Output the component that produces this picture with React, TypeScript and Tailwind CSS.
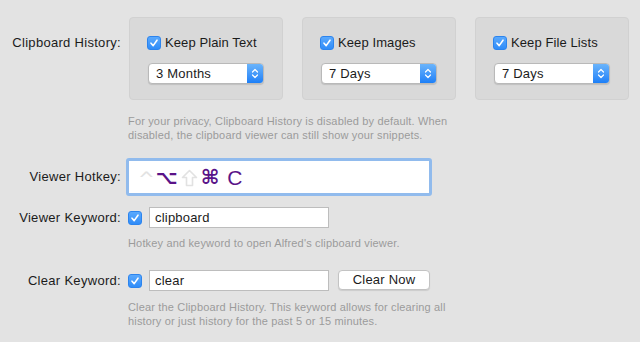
import React from "react";

const Check = () => (
    <div className="w-[14px] h-[14px] shrink-0 rounded-[3px] bg-gradient-to-b from-[#5aa9fd] to-[#2f8cf8] border border-[#2c84ee] flex items-center justify-center">
        <svg width="10" height="10" viewBox="0 0 10 10" fill="none">
            <path d="M2 5.2 L4.2 7.6 L8 2.2" stroke="white" strokeWidth="1.6" strokeLinecap="round" strokeLinejoin="round" />
        </svg>
    </div>
);

const Select = ({ value }: { value: string }) => (
    <div className="w-[116px] h-[21px] flex bg-white rounded-[4px] border border-[#b9b9b9] shadow-[0_1px_1px_rgba(0,0,0,0.12)] overflow-hidden">
        <div className="flex-1 pl-[7px] leading-[19px] tracking-[0.2px]">{value}</div>
        <div className="w-[16px] bg-gradient-to-b from-[#6ab4fb] to-[#1b7ff7] flex items-center justify-center">
            <svg width="8" height="13" viewBox="0 0 8 13" fill="none">
                <path d="M1.5 5 L4 2.5 L6.5 5" stroke="white" strokeWidth="1.2" strokeLinecap="round" strokeLinejoin="round" />
                <path d="M1.5 8 L4 10.5 L6.5 8" stroke="white" strokeWidth="1.2" strokeLinecap="round" strokeLinejoin="round" />
            </svg>
        </div>
    </div>
);

const Panel = ({ label, value }: { label: string; value: string }) => (
    <div className="w-[154px] h-[83px] rounded-[4px] bg-[#d9d9d9] border border-[#d1d1d1] pl-[17px] pt-[18px]">
        <div className="flex items-center h-[14px] gap-[4px]">
            <Check />
            <span className="tracking-[0.1px]">{label}</span>
        </div>
        <div className="mt-[13px] ml-[1px]">
            <Select value={value} />
        </div>
    </div>
);

const Hint = ({ children }: { children: React.ReactNode }) => (
    <div className="ml-[128px] text-[11px] leading-[14px] tracking-[0.16px] text-[#9b9b9b]">{children}</div>
);

const Label = ({ children, className = "" }: { children: React.ReactNode; className?: string }) => (
    <div className={"w-[121px] text-right tracking-[0.3px] " + className}>{children}</div>
);

// hollow shift arrow, light grey like a disabled modifier
const ShiftGlyph = () => (
    <svg width="17" height="18" viewBox="0 0 17 18" fill="none" className="mt-[1px]">
        <path d="M8.5 1.5 L15.5 8.5 L11.5 8.5 L11.5 16.5 L5.5 16.5 L5.5 8.5 L1.5 8.5 Z" stroke="#e2e2e2" strokeWidth="1.6" strokeLinejoin="round" />
    </svg>
);

export default function App() {
    return (
        <div className="w-[640px] h-[342px] overflow-hidden bg-[#e3e3e3] text-[13px] text-[#1b1b1b] font-['Liberation_Sans',Arial,sans-serif]">
            <div className="flex pt-[17px]">
                <Label className="pt-[18px] leading-[16px]">Clipboard History:</Label>
                <div className="ml-[8px] flex gap-[19px]">
                    <Panel label="Keep Plain Text" value="3 Months" />
                    <Panel label="Keep Images" value="7 Days" />
                    <Panel label="Keep File Lists" value="7 Days" />
                </div>
            </div>

            <div className="mt-[14px]">
                <Hint>
                    For your privacy, Clipboard History is disabled by default. When<br />
                    disabled, the clipboard viewer can still show your snippets.
                </Hint>
            </div>

            <div className="flex items-center mt-[16px]">
                <Label>Viewer Hotkey:</Label>
                <div className="ml-[5px] w-[306px] h-[38px] rounded-[3px] border-[3px] border-[#91bbed] bg-white flex items-center pl-[9px] font-['DejaVu_Sans',sans-serif] leading-none">
                    <span className="text-[#e2e2e2] text-[20px] mt-[3px]">^</span>
                    <span className="text-[#5a1388] text-[19px] font-bold ml-[1px]">⌥</span>
                    <span className="ml-[3px]"><ShiftGlyph /></span>
                    <span className="text-[#5a1388] text-[20px] font-bold ml-[3px]">⌘</span>
                    <span className="text-[#5a1388] ml-[8px] font-['Liberation_Sans',sans-serif] text-[21px]">C</span>
                </div>
            </div>

            <div className="flex items-center mt-[11px]">
                <Label>Viewer Keyword:</Label>
                <div className="ml-[7px]"><Check /></div>
                <div className="ml-[7px] w-[180px] h-[21px] bg-white border border-[#bdbdbd] pl-[5px] leading-[19px] tracking-[0.2px]">clipboard</div>
            </div>

            <div className="mt-[8px]">
                <Hint>Hotkey and keyword to open Alfred's clipboard viewer.</Hint>
            </div>

            <div className="flex items-center mt-[20px]">
                <Label>Clear Keyword:</Label>
                <div className="ml-[7px]"><Check /></div>
                <div className="ml-[7px] w-[180px] h-[21px] bg-white border border-[#bdbdbd] pl-[5px] leading-[19px] tracking-[0.2px]">clear</div>
                <button className="ml-[9px] w-[92px] h-[20px] -mt-[1px] bg-white rounded-[4px] border border-[#c3c3c3] shadow-[0_1px_1px_rgba(0,0,0,0.1)] leading-[18px] text-center tracking-[0.2px]">Clear Now</button>
            </div>

            <div className="mt-[9px]">
                <Hint>
                    Clear the Clipboard History. This keyword allows for clearing all<br />
                    history or just history for the past 5 or 15 minutes.
                </Hint>
            </div>
        </div>
    );
}
